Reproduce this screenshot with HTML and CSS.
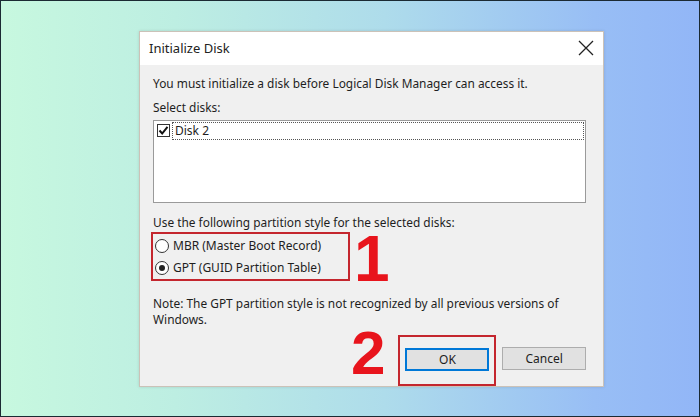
FILE: index.html
```html
<!DOCTYPE html>
<html lang="en">
<head>
    <meta charset="UTF-8">
    <meta name="viewport" content="width=device-width, initial-scale=1.0">
    <title>Initialize Disk</title>
    <link rel="stylesheet" href="styles.css">
</head>
<body>
    <div class="stage">
        <div class="dialog">
            <div class="titlebar">
                <span class="title">Initialize Disk</span>
                <svg class="close" width="16" height="16" viewBox="0 0 16 16">
                    <path d="M1 1 L15 15 M15 1 L1 15" stroke="#222" stroke-width="1.3" fill="none"/>
                </svg>
            </div>

            <div class="content">
                <p class="line intro">You must initialize a disk before Logical Disk Manager can access it.</p>
                <p class="line select-label">Select disks:</p>

                <div class="listbox">
                    <div class="disk-row">
                        <span class="checkbox">
                            <svg width="11" height="11" viewBox="0 0 11 11">
                                <path d="M1.5 5.5 L4.2 8.5 L9.5 1.8" stroke="#111" stroke-width="2" fill="none"/>
                            </svg>
                        </span>
                        <span class="disk-name">Disk 2</span>
                    </div>
                </div>

                <p class="line style-label">Use the following partition style for the selected disks:</p>

                <div class="partition-row">
                    <div class="mark-box radios">
                        <label class="radio"><span class="dot"></span>MBR (Master Boot Record)</label>
                        <label class="radio"><span class="dot checked"></span>GPT (GUID Partition Table)</label>
                    </div>
                    <span class="step step-one">1</span>
                </div>

                <p class="line note">Note: The GPT partition style is not recognized by all previous versions of<br>Windows.</p>

                <div class="button-row">
                    <span class="step step-two">2</span>
                    <div class="mark-box ok-box">
                        <button class="btn btn-default">OK</button>
                    </div>
                    <button class="btn btn-cancel">Cancel</button>
                </div>
            </div>
        </div>
    </div>
</body>
</html>
```

FILE: styles.css
```css
body {
    margin: 0;
    padding: 0;
    font-family: "Noto Sans", "Open Sans", sans-serif;
    color: #1e1e1e;
}

.stage {
    width: 700px;
    height: 417px;
    box-sizing: border-box;
    border: 1px solid #1b2a33;
    background: linear-gradient(90deg, #c7f8df 0%, #bdeee2 25%, #aedceb 55%, #98bef5 85%, #92b6f7 100%);
    display: flex;
    align-items: center;
    padding-left: 138px;
}

.dialog {
    width: 465px;
    height: 356px;
    box-sizing: border-box;
    border: 1px solid #cbc2b8;
    background-color: #f0f0f0;
    box-shadow: 0 0 3px rgba(0, 0, 0, 0.12);
    display: flex;
    flex-direction: column;
    overflow: hidden;
}

.titlebar {
    height: 33px;
    background-color: #fff;
    display: flex;
    align-items: center;
    justify-content: space-between;
    padding: 0 9px 0 9px;
    flex-shrink: 0;
}

.title {
    font-size: 13px;
    color: #222;
}

.content {
    padding: 0 17px 0 13px;
}

.line {
    margin: 0;
    font-size: 11.9px;
    line-height: 16px;
    white-space: nowrap;
}

.intro {
    margin-top: 10px;
}

.select-label {
    margin-top: 8px;
}

.listbox {
    margin-top: 5px;
    height: 83px;
    box-sizing: border-box;
    border: 1px solid #9a9a9a;
    background-color: #fff;
    padding: 1px;
}

.disk-row {
    display: flex;
    align-items: center;
    height: 18px;
}

.checkbox {
    width: 11px;
    height: 11px;
    border: 1px solid #333;
    margin: 0 2px 0 2px;
    display: flex;
    align-items: center;
    justify-content: center;
    background-color: #fff;
}

.disk-name {
    flex: 1;
    height: 16px;
    border: 1px dotted #555;
    font-size: 12px;
    line-height: 16px;
    padding-left: 2px;
}

.style-label {
    margin-top: 11px;
}

.partition-row {
    display: flex;
    align-items: flex-start;
    height: 49px;
    margin-top: 2px;
    margin-left: -2px;
}

.mark-box {
    border: 2px solid #c4262e;
    box-sizing: border-box;
}

.radios {
    width: 199px;
    height: 49px;
    padding: 4px 0 0 2px;
    display: flex;
    flex-direction: column;
    gap: 6px;
}

.radio {
    display: flex;
    align-items: center;
    font-size: 12px;
    line-height: 16px;
    gap: 4px;
}

.dot {
    width: 12px;
    height: 12px;
    border: 1px solid #333;
    border-radius: 50%;
    background-color: #fff;
    display: flex;
    align-items: center;
    justify-content: center;
}

.dot.checked::after {
    content: "";
    width: 6px;
    height: 6px;
    border-radius: 50%;
    background-color: #222;
}

.step {
    font-family: "Liberation Sans", Arial, sans-serif;
    font-weight: bold;
    color: #e8141c;
    line-height: 1;
}

.step-one {
    font-size: 64px;
    margin-left: 4px;
    margin-top: -5px;
}

.note {
    margin-top: 14px;
}

.button-row {
    display: flex;
    align-items: flex-start;
    height: 51px;
    margin-top: 8px;
}

.step-two {
    font-size: 62px;
    margin-left: 198px;
    margin-top: -13px;
}

.ok-box {
    width: 98px;
    height: 51px;
    margin-left: 13px;
    padding: 10px 0 0 5px;
}

.btn {
    width: 84px;
    height: 23px;
    box-sizing: border-box;
    background-color: #e1e1e1;
    font-family: "Noto Sans", "Open Sans", sans-serif;
    font-size: 12px;
    color: #1e1e1e;
    padding: 0;
}

.btn-default {
    border: 2px solid #0078d7;
}

.btn-cancel {
    border: 1px solid #adadad;
    margin-left: 6px;
    margin-top: 12px;
}
```
